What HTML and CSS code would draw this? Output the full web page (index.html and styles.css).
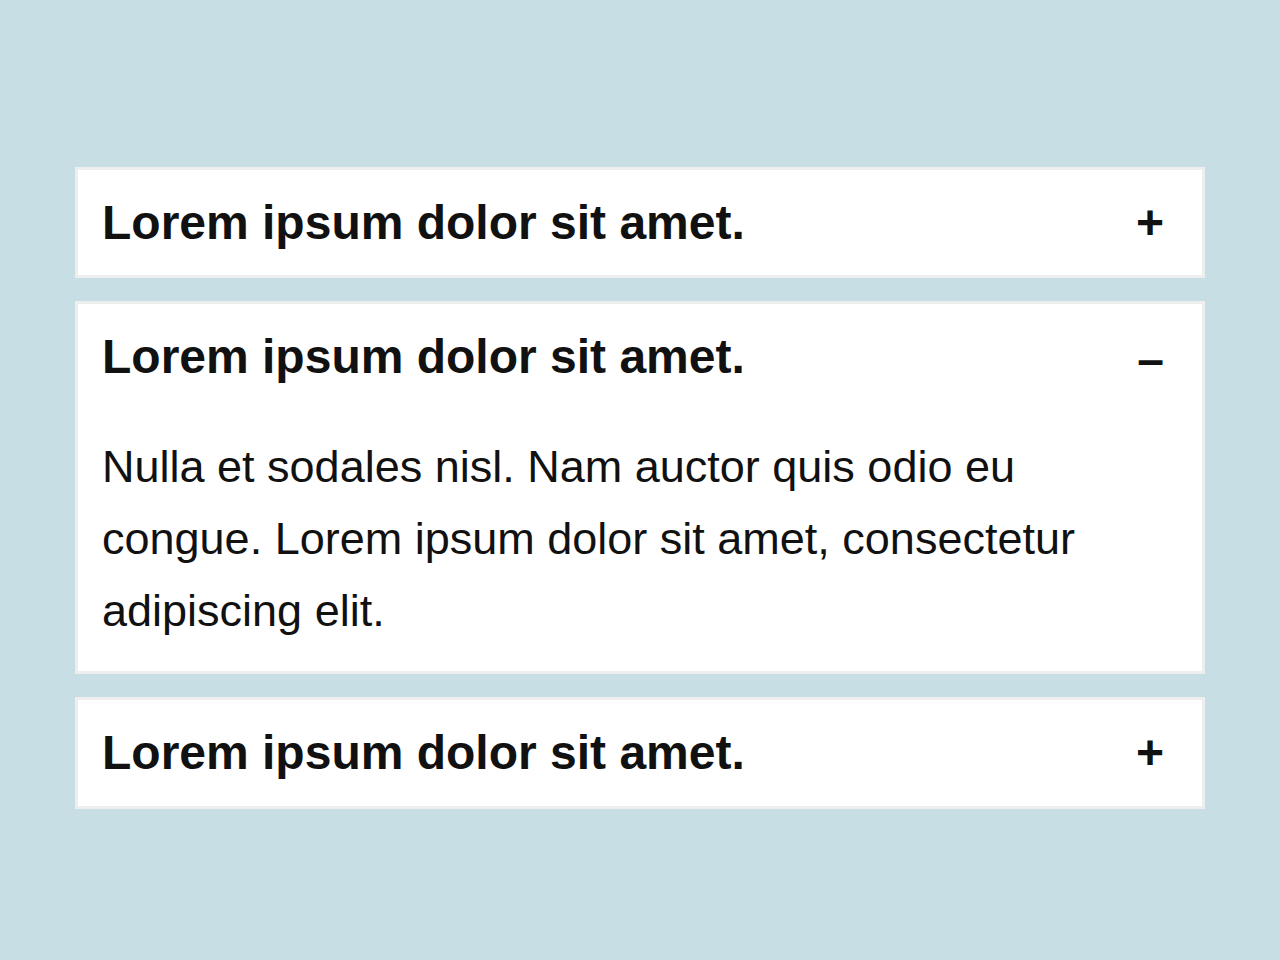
FILE: index.html
```html
<!DOCTYPE html>
<html lang="en">
<head>
<meta charset="utf-8">
<title>Accordion</title>
<link rel="stylesheet" href="styles.css">
</head>
<body>
<div class="accordion">
  <div class="item">
    <div class="item-header">
      <h2 class="item-title">Lorem ipsum dolor sit amet.</h2>
      <span class="item-icon">+</span>
    </div>
  </div>
  <div class="item is-open">
    <div class="item-header">
      <h2 class="item-title">Lorem ipsum dolor sit amet.</h2>
      <span class="item-icon item-icon--minus">–</span>
    </div>
    <div class="item-body">
      <p>Nulla et sodales nisl. Nam auctor quis odio eu congue. Lorem ipsum dolor sit amet, consectetur adipiscing elit.</p>
    </div>
  </div>
  <div class="item">
    <div class="item-header">
      <h2 class="item-title">Lorem ipsum dolor sit amet.</h2>
      <span class="item-icon">+</span>
    </div>
  </div>
</div>
</body>
</html>
```
FILE: styles.css
```css
html, body {
  margin: 0;
  padding: 0;
}
body {
  background: #c7dee4;
  font-family: "Liberation Sans", Arial, sans-serif;
  color: #111111;
  min-height: 960px;
}
.accordion {
  width: 1130px;
  margin: 0 auto;
  padding-top: 167px;
  display: flex;
  flex-direction: column;
  gap: 23px;
}
.item {
  background: #ffffff;
  border: 3px solid #eeeeee;
}
.item-header {
  display: flex;
  justify-content: space-between;
  align-items: baseline;
  padding: 25px 24px;
}
.item-title {
  margin: 0;
  font-size: 48px;
  font-weight: 700;
  line-height: 1.15;
}
.item-icon {
  font-size: 48px;
  font-weight: 700;
  line-height: 1.15;
  margin-right: 14px;
}
.item-icon--minus {
  transform: translateY(3px);
}
.item-body {
  padding: 22px 24px 24px;
}
.item-body p {
  margin: 0;
  font-size: 45px;
  line-height: 72px;
}
```
